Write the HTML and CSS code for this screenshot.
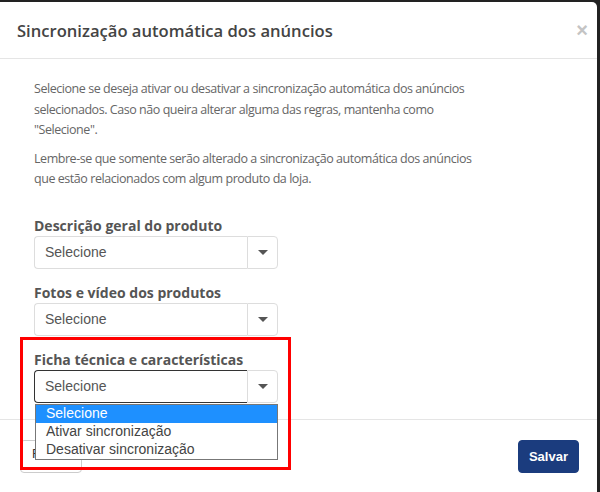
FILE: index.html
```html
<!DOCTYPE html>
<html lang="pt-BR">
<head>
    <meta charset="UTF-8">
    <meta name="viewport" content="width=device-width, initial-scale=1.0">
    <title>Sincronização automática dos anúncios</title>
    <link rel="stylesheet" href="styles.css">
</head>
<body>
    <div class="modal">
        <div class="modal-header">
            <h4 class="modal-title">Sincronização automática dos anúncios</h4>
            <span class="close">&times;</span>
        </div>

        <div class="modal-body">
            <p>Selecione se deseja ativar ou desativar a sincronização automática dos anúncios selecionados. Caso não queira alterar alguma das regras, mantenha como "Selecione".</p>
            <p>Lembre-se que somente serão alterado a sincronização automática dos anúncios que estão relacionados com algum produto da loja.</p>

            <div class="form-group">
                <label>Descrição geral do produto</label>
                <div class="select">
                    <div class="select-field">Selecione</div>
                    <div class="select-btn"><span class="caret"></span></div>
                </div>
            </div>

            <div class="form-group">
                <label>Fotos e vídeo dos produtos</label>
                <div class="select">
                    <div class="select-field">Selecione</div>
                    <div class="select-btn"><span class="caret"></span></div>
                </div>
            </div>

            <div class="form-group highlighted">
                <label>Ficha técnica e características</label>
                <div class="select open">
                    <div class="select-field">Selecione</div>
                    <div class="select-btn"><span class="caret"></span></div>
                    <ul class="select-options">
                        <li class="active">Selecione</li>
                        <li>Ativar sincronização</li>
                        <li>Desativar sincronização</li>
                    </ul>
                </div>
            </div>
        </div>

        <div class="modal-footer">
            <button class="btn btn-default">Fechar</button>
            <button class="btn btn-primary">Salvar</button>
        </div>
    </div>
</body>
</html>
```

FILE: styles.css
```css
* {
    margin: 0;
    padding: 0;
    box-sizing: border-box;
}

body {
    background-color: #222;
    font-family: 'Open Sans', 'Noto Sans', sans-serif;
    overflow: hidden;
    height: 492px;
}

.modal {
    width: 597px;
    margin-top: 2px;
    background: white;
    border-top-right-radius: 5px;
    min-height: 520px;
}

.modal-header {
    display: flex;
    align-items: center;
    justify-content: space-between;
    height: 57px;
    padding: 0 9px 0 17px;
    border-bottom: 1px solid #e5e5e5;
}

.modal-title {
    font-size: 16.6px;
    font-weight: 600;
    color: #444;
}

.close {
    font-family: 'Liberation Sans', Arial, sans-serif;
    font-size: 20px;
    font-weight: bold;
    color: #c4c4c4;
    line-height: 1;
}

.modal-body {
    padding: 20px 34px 16px;
}

.modal-body p {
    max-width: 450px;
    font-size: 12.5px;
    letter-spacing: -0.45px;
    line-height: 20.5px;
    color: #666;
    margin-bottom: 8px;
}

.modal-body p + .form-group {
    margin-top: 26px;
}

.form-group {
    margin-bottom: 14px;
}

.form-group:last-child {
    margin-bottom: 0;
}

.form-group label {
    display: block;
    font-size: 14px;
    font-weight: bold;
    line-height: 20px;
    color: #555;
}

.highlighted {
    position: relative;
    width: 244px;
}

.highlighted::after {
    content: "";
    position: absolute;
    top: -13px;
    left: -14px;
    right: -13px;
    bottom: -67px;
    border: 3px solid #f00;
    z-index: 5;
}

.select {
    display: flex;
    width: 244px;
    height: 33px;
    position: relative;
    font-family: 'Liberation Sans', Arial, sans-serif;
    font-size: 14px;
    color: #555;
}

.select-field {
    flex: 1;
    display: flex;
    align-items: center;
    padding-left: 10px;
    border: 1px solid #ddd;
    border-right: none;
    border-radius: 4px 0 0 4px;
}

.select-btn {
    width: 31px;
    display: flex;
    align-items: center;
    justify-content: center;
    border: 1px solid #ddd;
    border-radius: 0 4px 4px 0;
}

.caret {
    width: 0;
    height: 0;
    border-left: 5px solid transparent;
    border-right: 5px solid transparent;
    border-top: 5px solid #555;
}

.open .select-field {
    border-color: #333;
}

.select-options {
    list-style: none;
    position: absolute;
    top: 34px;
    left: 1px;
    width: 243px;
    background: white;
    border: 1px solid #777;
    z-index: 3;
    color: #444;
}

.select-options li {
    height: 18px;
    line-height: 17px;
    padding-left: 10px;
}

.select-options li.active {
    background: #1e90ff;
    color: white;
}

.modal-footer {
    display: flex;
    justify-content: space-between;
    padding: 20px 18px 20px 20px;
    border-top: 1px solid #e5e5e5;
}

.btn {
    height: 33px;
    padding: 0 11px;
    font-family: 'Liberation Sans', Arial, sans-serif;
    font-size: 13px;
    border-radius: 4px;
    border: 1px solid #ccc;
    background: white;
    color: #333;
}

.btn-default {
    width: 62px;
    text-align: left;
    padding-bottom: 5px;
}

.btn-primary {
    background: #1b3c7e;
    border-color: #1b3c7e;
    color: white;
    font-weight: bold;
    padding: 0 10px;
}
```
